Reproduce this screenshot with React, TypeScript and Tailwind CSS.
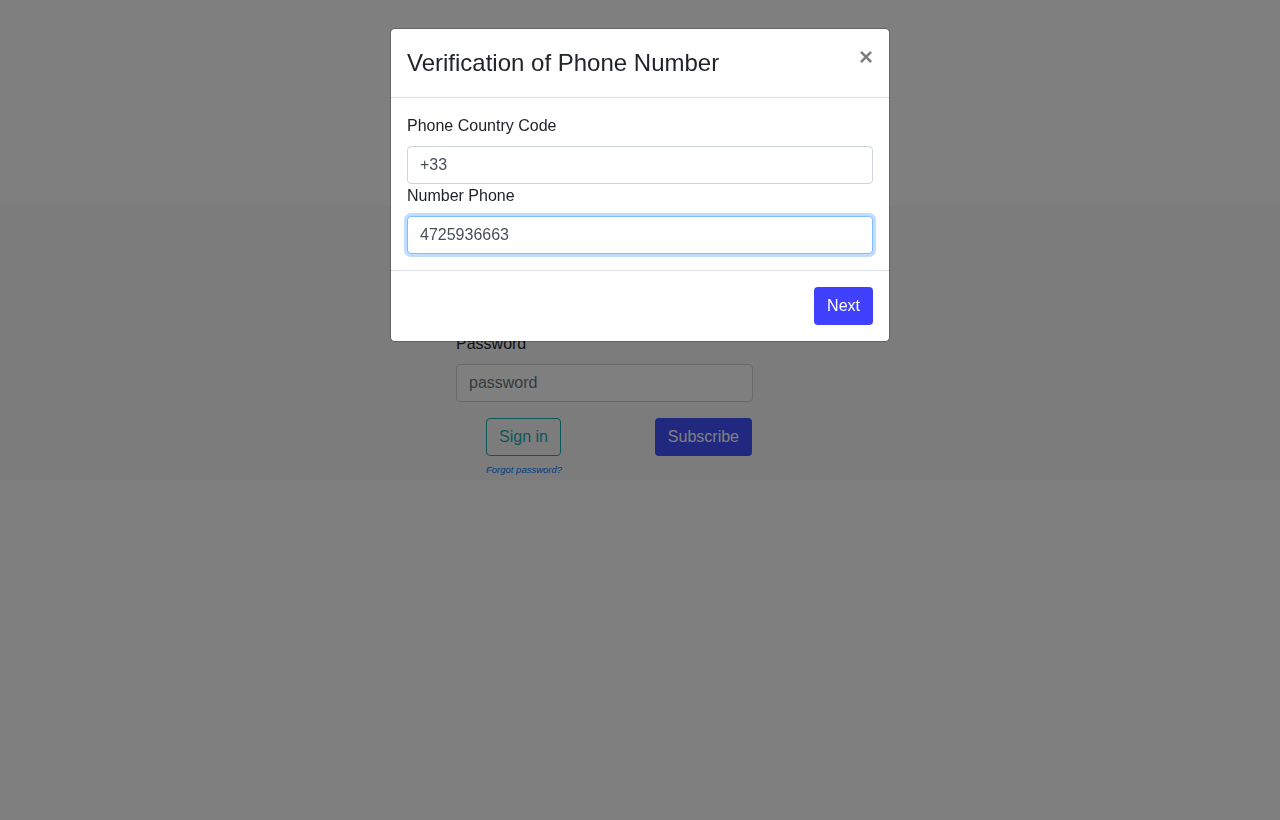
import { useState } from "react";

const font = { fontFamily: '"Liberation Sans", Arial, sans-serif' };

function LoginPage() {
  return (
    <div className="min-h-[820px] bg-white flex flex-col">
      <div className="h-[205px] bg-white" />
      <section className="h-[275px] bg-[#f8f9fa]">
        <form className="ml-[456px] w-[297px] pt-[57px]">
          <label className="block text-base leading-6 text-[#212529] mb-2">Email</label>
          <input
            className="block w-full h-[38px] px-3 text-base text-[#495057] bg-white border border-[#ced4da] rounded"
            placeholder="email"
          />
          <label className="block text-base leading-6 text-[#212529] mb-2">Password</label>
          <input
            type="text"
            className="block w-full h-[38px] px-3 text-base text-[#495057] placeholder:text-[#6c757d] bg-white border border-[#ced4da] rounded outline-none"
            placeholder="password"
          />
          <div className="flex justify-between items-start mt-4 pl-[30px] pr-px">
            <div className="flex flex-col items-start">
              <button
                type="button"
                className="h-[38px] px-3 text-base text-[#17b0b8] border border-[#17b0b8] rounded bg-transparent"
              >
                Sign in
              </button>
              <a className="mt-[8px] text-[9.5px] leading-3 italic text-[#007bff]">Forgot password?</a>
            </div>
            <button
              type="button"
              className="h-[38px] px-3 text-base text-white bg-[#4050ff] border border-transparent rounded"
            >
              Subscribe
            </button>
          </div>
        </form>
      </section>
      <div className="flex-1 bg-white" />
    </div>
  );
}

function PhoneModal() {
  const [code, setCode] = useState("+33");
  const [phone, setPhone] = useState("4725936663");
  return (
    <div className="fixed inset-0 flex justify-center items-start pt-[28px]">
      <div className="w-[500px] bg-white bg-clip-padding border border-black/20 rounded-[5px] flex flex-col">
        <div className="flex items-start p-4 border-b border-[#dee2e6]">
          <h4 className="text-2xl leading-9 text-[#212529]">Verification of Phone Number</h4>
          <button
            type="button"
            className="ml-auto -m-4 p-4 text-2xl leading-none font-bold text-black/50"
            style={{ textShadow: "0 1px 0 #fff" }}
          >
            ×
          </button>
        </div>
        <div className="p-4">
          <label className="block text-base leading-6 text-[#212529] mb-2">Phone Country Code</label>
          <input
            value={code}
            onChange={(e) => setCode(e.target.value)}
            className="block w-full h-[38px] px-3 text-base text-[#495057] bg-white border border-[#ced4da] rounded outline-none"
          />
          <label className="block text-base leading-6 text-[#212529] mb-2">Number Phone</label>
          <input
            value={phone}
            onChange={(e) => setPhone(e.target.value)}
            className="block w-full h-[38px] px-3 text-base text-[#495057] bg-white border border-[#80bdff] rounded outline-none shadow-[0_0_0_3px_rgba(0,123,255,0.25)]"
          />
        </div>
        <div className="flex justify-end p-4 border-t border-[#dee2e6]">
          <button
            type="button"
            className="h-[38px] px-3 text-base text-white bg-[#4040ff] border border-transparent rounded"
          >
            Next
          </button>
        </div>
      </div>
    </div>
  );
}

export default function App() {
  return (
    <div style={font} className="relative">
      <LoginPage />
      <div className="fixed inset-0 bg-black/50" />
      <PhoneModal />
    </div>
  );
}
